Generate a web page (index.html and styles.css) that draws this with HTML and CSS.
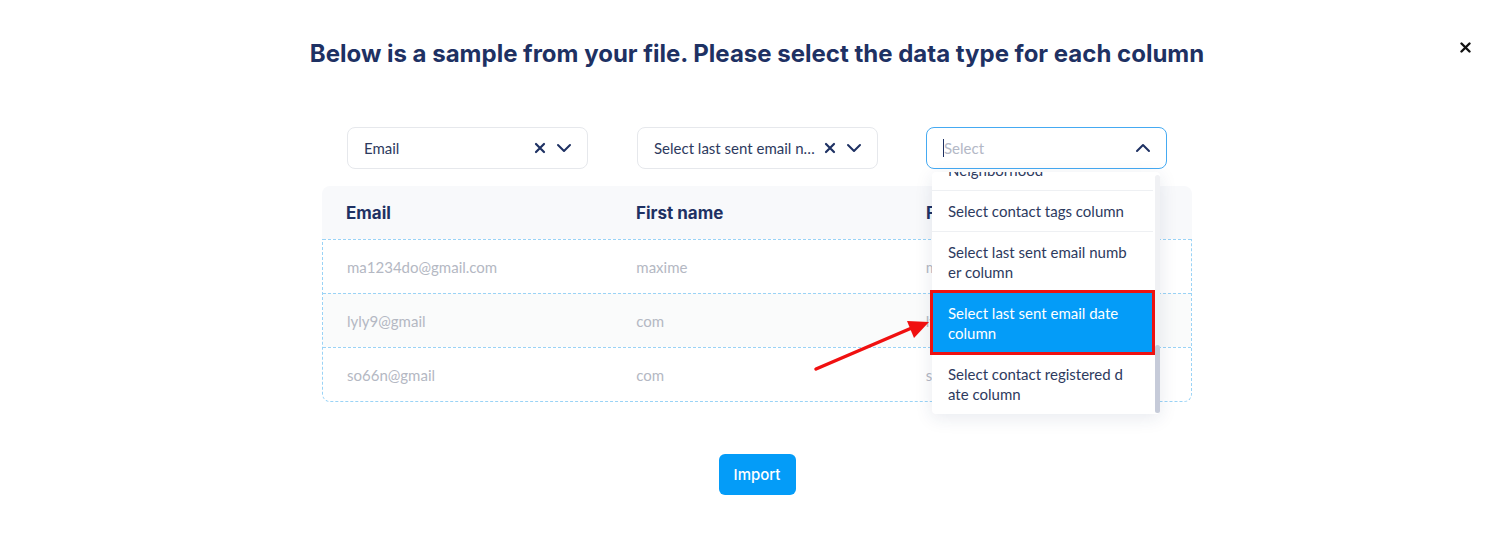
FILE: index.html
```html
<!DOCTYPE html>
<html lang="en">
<head>
  <meta charset="UTF-8">
  <meta name="viewport" content="width=device-width, initial-scale=1.0">
  <title>Import contacts - map columns</title>
  <link rel="stylesheet" href="styles.css">
</head>
<body>
  <div class="modal">
    <!-- Close -->
    <button class="close" aria-label="Close">
      <svg width="11" height="11" viewBox="0 0 11 11"><path d="M1.5 1.5l8 8M9.5 1.5l-8 8" stroke="#111" stroke-width="2.4" stroke-linecap="round"/></svg>
    </button>

    <h2 class="title">Below is a sample from your file. Please select the data type for each column</h2>

    <div class="mapper">
      <!-- Column type selects -->
      <div class="selects">
        <div class="field">
          <div class="select">
            <span class="value">Email</span>
            <svg class="clear" width="12" height="12" viewBox="0 0 12 12"><path d="M2 2l8 8M10 2l-8 8" stroke="#1e3163" stroke-width="2.2" stroke-linecap="round"/></svg>
            <svg class="chevron" width="16" height="10" viewBox="0 0 16 10"><path d="M2 2l6 6 6-6" fill="none" stroke="#1e3163" stroke-width="2" stroke-linecap="round" stroke-linejoin="round"/></svg>
          </div>
        </div>
        <div class="field">
          <div class="select">
            <span class="value">Select last sent email number column</span>
            <svg class="clear" width="12" height="12" viewBox="0 0 12 12"><path d="M2 2l8 8M10 2l-8 8" stroke="#1e3163" stroke-width="2.2" stroke-linecap="round"/></svg>
            <svg class="chevron" width="16" height="10" viewBox="0 0 16 10"><path d="M2 2l6 6 6-6" fill="none" stroke="#1e3163" stroke-width="2" stroke-linecap="round" stroke-linejoin="round"/></svg>
          </div>
        </div>
        <div class="field">
          <div class="select open">
            <span class="caret"></span>
            <span class="placeholder">Select</span>
            <svg class="chevron" width="16" height="10" viewBox="0 0 16 10"><path d="M2 8l6-6 6 6" fill="none" stroke="#1e3163" stroke-width="2" stroke-linecap="round" stroke-linejoin="round"/></svg>
          </div>

          <!-- Open dropdown -->
          <div class="dropdown">
            <ul class="options">
              <li class="option cut"><span>Neighborhood</span></li>
              <li class="option">Select contact tags column</li>
              <li class="option">Select last sent email numb<br>er column</li>
              <li class="option active">Select last sent email date<br>column</li>
              <li class="option">Select contact registered d<br>ate column</li>
            </ul>
            <div class="scrollbar"><div class="thumb"></div></div>
          </div>
        </div>
      </div>

      <!-- Sample table -->
      <div class="table">
        <div class="row head">
          <div class="cell">Email</div>
          <div class="cell">First name</div>
          <div class="cell">First name</div>
        </div>
        <div class="body">
          <div class="row">
            <div class="cell">ma1234do@gmail.com</div>
            <div class="cell">maxime</div>
            <div class="cell">maxime</div>
          </div>
          <div class="row alt">
            <div class="cell">lyly9@gmail</div>
            <div class="cell">com</div>
            <div class="cell">lyly9</div>
          </div>
          <div class="row">
            <div class="cell">so66n@gmail</div>
            <div class="cell">com</div>
            <div class="cell">so66n</div>
          </div>
        </div>
      </div>
    </div>

    <div class="actions">
      <button class="import">Import</button>
    </div>

    <!-- Annotation arrow -->
    <svg class="arrow" width="140" height="70" viewBox="0 0 140 70">
      <path d="M6 58L104 16" stroke="#f01010" stroke-width="3.5" stroke-linecap="round"/>
      <path d="M119 11L97 10L104 27Z" fill="#f01010"/>
    </svg>
  </div>
</body>
</html>
```

FILE: styles.css
```css
* {
  box-sizing: border-box;
}
body {
  margin: 0;
  background: #fff;
  font-family: 'Lato', 'Noto Sans', sans-serif;
  color: #2d3a5e;
}
.modal {
  position: relative;
  height: 534px;
  padding: 38px 0 0 4px;
  overflow: hidden;
}
.close {
  position: absolute;
  top: 40px;
  right: 38px;
  width: 14px;
  height: 14px;
  padding: 0;
  border: none;
  background: none;
  cursor: pointer;
  display: flex;
  align-items: center;
  justify-content: center;
}
.title {
  margin: 0;
  text-align: center;
  font-family: 'Inter', sans-serif;
  font-size: 24px;
  line-height: 32px;
  font-weight: 700;
  color: #1e3163;
}
.mapper {
  width: 870px;
  margin: 57px auto 0;
}
.selects {
  display: grid;
  grid-template-columns: repeat(3, 1fr);
}
.field {
  position: relative;
  padding-left: 25px;
}
.field:last-child {
  padding-left: 24px;
}
.select {
  width: 241px;
  height: 42px;
  display: flex;
  align-items: center;
  padding: 0 15px 0 16px;
  border: 1px solid #e6e8ec;
  border-radius: 8px;
  background: #fff;
  font-size: 15px;
}
.select .value {
  flex: 1;
  min-width: 0;
  white-space: nowrap;
  overflow: hidden;
  text-overflow: ellipsis;
  color: #2d3a5e;
}
.select .clear {
  margin: 0 10px 0 8px;
}
.select.open {
  border-color: #45aaf2;
}
.caret {
  width: 1px;
  height: 18px;
  background: #1e3163;
}
.placeholder {
  flex: 1;
  color: #b3b8c6;
}
.dropdown {
  position: absolute;
  top: 45px;
  left: 30px;
  width: 228px;
  background: #fff;
  border-radius: 4px;
  box-shadow: 0 4px 18px rgba(30, 49, 99, 0.1);
  z-index: 5;
  display: flex;
}
.options {
  list-style: none;
  margin: 0;
  padding: 0;
  width: 221px;
}
.option {
  padding: 10px 16px;
  font-size: 15px;
  line-height: 20px;
  color: #2d3a5e;
  border-top: 1px solid #eef0f3;
  white-space: nowrap;
  cursor: pointer;
}
.option.cut {
  height: 18px;
  padding: 0 16px;
  overflow: hidden;
  border-top: none;
}
.option.cut span {
  display: block;
  margin-top: -12px;
}
.option.active {
  background: #049cf8;
  color: #fff;
  outline: 3px solid #ee1111;
  outline-offset: -1px;
  position: relative;
}
.scrollbar {
  width: 5px;
  margin: 3px 0 0 2px;
  height: 238px;
  background: #f0f1f4;
  border-radius: 3px;
  display: flex;
  flex-direction: column;
  justify-content: flex-end;
}
.thumb {
  height: 68px;
  background: #c6cbd9;
  border-radius: 3px;
}
.table {
  margin-top: 17px;
}
.row {
  display: grid;
  grid-template-columns: repeat(3, 1fr);
  height: 54px;
  align-items: center;
  border-top: 1px dashed #9ad3f6;
}
.row.head {
  height: 53px;
  border-top: none;
  background: #f8f9fb;
  border-radius: 8px 8px 0 0;
  font-family: 'Inter', sans-serif;
  font-weight: 700;
  color: #1e3163;
}
.row.alt {
  background: #fafbfb;
}
.cell {
  padding-left: 24px;
  font-size: 15px;
  color: #b4b8c3;
  white-space: nowrap;
  overflow: hidden;
}
.row.head .cell {
  font-size: 17px;
  color: #1e3163;
}
.body {
  border: 1px dashed #9ad3f6;
  border-top: none;
  border-radius: 0 0 8px 8px;
}
.actions {
  display: flex;
  justify-content: center;
  margin-top: 52px;
}
.import {
  width: 77px;
  height: 41px;
  border: none;
  border-radius: 6px;
  background: #049cf8;
  color: #fff;
  font-family: 'Inter', sans-serif;
  font-size: 15px;
  font-weight: 500;
  cursor: pointer;
}
.arrow {
  position: absolute;
  left: 810px;
  top: 311px;
  z-index: 6;
}
```
